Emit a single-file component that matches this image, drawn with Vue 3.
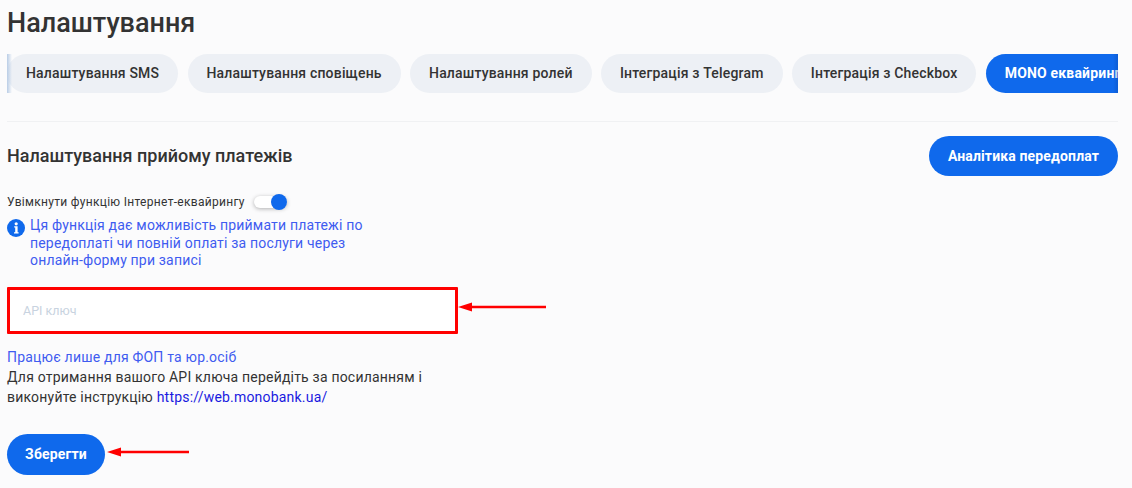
<script setup>
const tabs = ['Налаштування SMS', 'Налаштування сповіщень', 'Налаштування ролей', 'Інтеграція з Telegram', 'Інтеграція з Checkbox', 'MONO еквайринг']
</script>

<template>
  <div class="page">
    <h1 class="title">Налаштування</h1>
    <div class="tabs-wrap">
      <div class="tabs">
        <button v-for="(t, i) in tabs" :key="t" class="tab" :class="{ active: i === 5 }">{{ t }}</button>
      </div>
      <span class="shade-left"></span>
      <span class="shade-right"></span>
    </div>
    <div class="divider"></div>
    <div class="head">
      <h2 class="subtitle">Налаштування прийому платежів</h2>
      <button class="btn analytics">Аналітика передоплат</button>
    </div>
    <div class="toggle-row">
      <span>Увімкнути функцію Інтернет-еквайрингу</span>
      <span class="toggle"><span class="knob"></span></span>
    </div>
    <div class="info">
      <svg class="info-icon" width="18" height="18" viewBox="0 0 18 18">
        <circle cx="9" cy="9" r="9" fill="#0f69ec" />
        <circle cx="9.2" cy="4.8" r="1.6" fill="#fff" />
        <path d="M7.2 7.3h3.4v6h1v1.3H7v-1.3h1.2V8.6h-1z" fill="#fff" />
      </svg>
      <p>Ця функція дає можливість приймати платежі по передоплаті чи повній оплаті за послуги через онлайн-форму при записі</p>
    </div>
    <div class="field-row">
      <input class="field" placeholder="API ключ" />
      <svg class="arrow field-arrow" width="90" height="14" viewBox="0 0 90 14">
        <path d="M1 7 15 2.5V5.8H89V8.2H15V11.5Z" fill="#f00" />
      </svg>
    </div>
    <p class="note blue">Працює лише для ФОП та юр.осіб</p>
    <p class="note dark">Для отримання вашого API ключа перейдіть за посиланням і виконуйте інструкцію <a href="#">https://web.monobank.ua/</a></p>
    <div class="save-row">
      <button class="btn save">Зберегти</button>
      <svg class="arrow save-arrow" width="84" height="14" viewBox="0 0 84 14">
        <path d="M1 7 15 2.5V5.8H83V8.2H15V11.5Z" fill="#f00" />
      </svg>
    </div>
  </div>
</template>

<style>
html, body { margin: 0; background: #fbfbfc; }
</style>

<style scoped>
.page {
  box-sizing: border-box;
  width: 1132px;
  height: 488px;
  overflow: hidden;
  padding: 0 14px 0 7px;
  background: #fbfbfc;
  font-family: Roboto, "Noto Sans", sans-serif;
  color: #333;
}
.title {
  margin: 0;
  padding-top: 6px;
  height: 54px;
  box-sizing: border-box;
  font-size: 27px;
  line-height: 34px;
  font-weight: 500;
  color: #333;
}
.tabs-wrap { position: relative; width: 1111px; height: 39px; overflow: hidden; }
.tabs { display: flex; gap: 9.3px; width: max-content; }
.tab {
  height: 39px;
  padding: 0 19px;
  border: 0;
  border-radius: 20px;
  background: #edf0f5;
  color: #333;
  font: 500 14px/39px Roboto, sans-serif;
  letter-spacing: .18px;
  white-space: nowrap;
}
.tab.active { background: #0f69ec; color: #fff; font-weight: 700; }
.shade-left {
  position: absolute; left: 0; top: 0; width: 5px; height: 39px;
  background: linear-gradient(90deg, #b9cde6, rgba(185, 205, 230, 0));
}
.shade-right {
  position: absolute; right: 0; top: 0; width: 5px; height: 39px;
  background: linear-gradient(270deg, rgba(10, 70, 170, .35), rgba(10, 70, 170, 0));
}
.divider { margin-top: 28px; height: 1px; background: #f0f1f3; }
.head {
  display: flex; justify-content: space-between; align-items: center;
  margin-top: 14px; height: 40px;
}
.subtitle { margin: 0 0 2px; font-size: 18px; font-weight: 500; color: #333; }
.btn {
  border: 0;
  background: #0f69ec;
  color: #fff;
  font: 700 14px Roboto, sans-serif;
  letter-spacing: .15px;
  border-radius: 20px;
  height: 40px;
}
.analytics { width: 189px; padding: 0 0 1px; }
.toggle-row {
  display: flex; align-items: center; gap: 9px;
  margin-top: 16px; height: 20px;
  font-size: 12px; letter-spacing: .3px; color: #333;
}
.toggle {
  position: relative; display: block; width: 33px; height: 12px;
  border-radius: 6px; background: #fff; box-shadow: 0 1px 4px rgba(0, 0, 0, .3);
}
.knob {
  position: absolute; right: 0; top: -2px; width: 16px; height: 16px;
  border-radius: 50%; background: #0f69ec;
}
.info { display: flex; gap: 5px; margin-top: 5px; width: 380px; }
.info-icon { flex: none; margin-top: 2px; }
.info p {
  margin: 0; width: 340px;
  font-size: 14px; line-height: 17.5px; letter-spacing: .18px; color: #3f5cf0;
}
.field-row { display: flex; align-items: center; margin-top: 17px; }
.field {
  box-sizing: border-box; width: 451px; height: 47px;
  padding: 0 13px; border: 3px solid #f00; border-radius: 1px; outline: 0;
  background: #fff; font: 12.5px Roboto, sans-serif;
}
.field::placeholder { color: #c8d3e0; opacity: 1; }
.field-arrow { margin: 0 0 6px -1px; }
.note { margin: 0; font-size: 14px; line-height: 20px; letter-spacing: .2px; width: 440px; }
.blue { margin-top: 13px; color: #3f5cf0; }
.dark { color: #333; }
.dark a { color: #1a1ae0; text-decoration: none; }
.save-row { display: flex; align-items: center; gap: 2px; margin-top: 27px; }
.save { width: 98px; height: 41px; border-radius: 21px; }
.save-arrow { width: 84px; margin: 0 0 4px -1px; }
</style>
